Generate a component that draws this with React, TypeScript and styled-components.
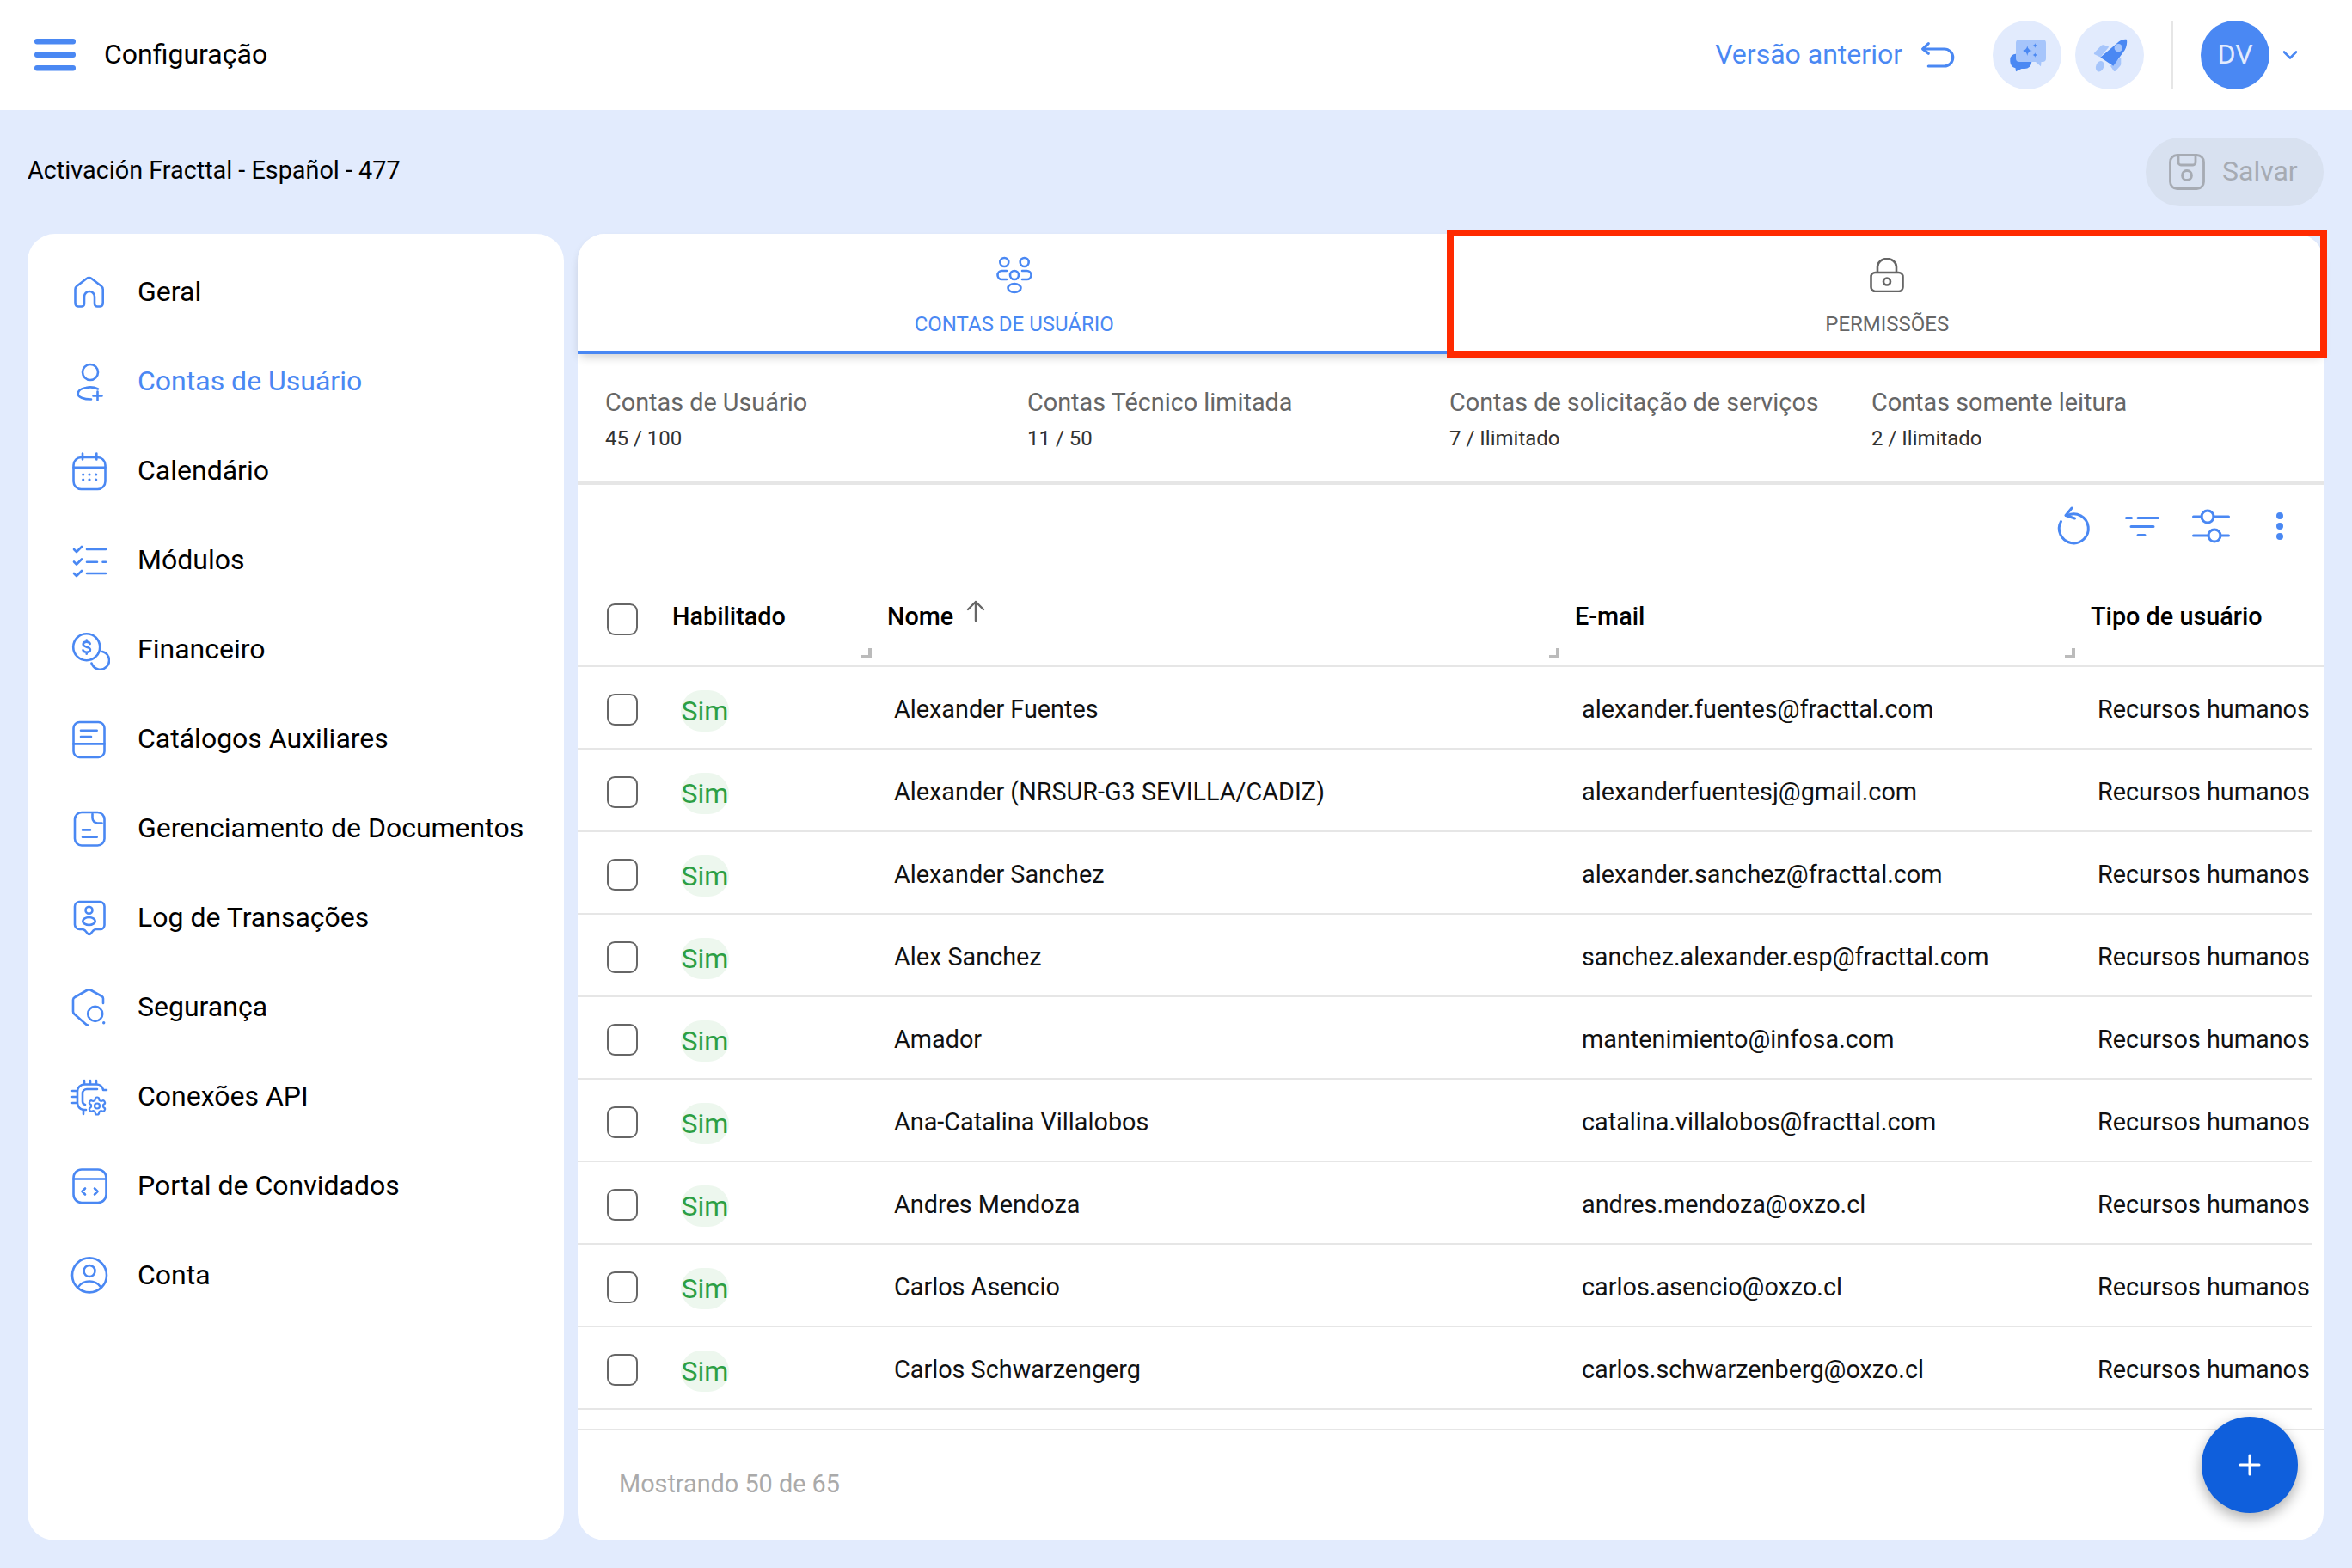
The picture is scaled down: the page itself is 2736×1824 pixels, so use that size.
import React from 'react'
import styled, { createGlobalStyle } from 'styled-components'

const BLUE = '#4a88f3'

const GlobalStyle = createGlobalStyle`
  html, body { margin: 0; padding: 0; background: #e2ebfd; }
  * { box-sizing: border-box; }
  body { font-family: Roboto, "Liberation Sans", sans-serif; color: #000; }
`

const Page = styled.div`
  width: 2736px;
  height: 1824px;
  display: flex;
  flex-direction: column;
  overflow: hidden;
  background: #e2ebfd;
`

const Header = styled.header`
  height: 128px;
  flex: none;
  background: #fff;
  display: flex;
  align-items: center;
  justify-content: space-between;
  padding: 0 60px 0 40px;
`

const HeaderLeft = styled.div`
  display: flex;
  align-items: center;
  gap: 33px;
  font-size: 32px;
`

const PageTitle = styled.span`
  padding-bottom: 2px;
`

const HeaderRight = styled.div`
  display: flex;
  align-items: center;
`

const PrevVersion = styled.span`
  font-size: 32px;
  color: ${BLUE};
  margin-right: 21px;
  padding-bottom: 2px;
`

const RoundButton = styled.div`
  width: 80px;
  height: 80px;
  border-radius: 50%;
  background: #e2ebfd;
  margin-left: ${p => p.$gap}px;
`

const VDivider = styled.div`
  width: 2px;
  height: 80px;
  background: #e6e6e6;
  margin: 0 32px;
`

const Avatar = styled.div`
  width: 80px;
  height: 80px;
  border-radius: 50%;
  background: #4a88f3;
  color: #e2ebfd;
  font-size: 32px;
  display: flex;
  align-items: center;
  justify-content: center;
  margin-right: 12px;
  padding-bottom: 2px;
`

const SubHeader = styled.div`
  height: 144px;
  flex: none;
  display: flex;
  justify-content: space-between;
  align-items: flex-start;
  padding: 32px 33px 0 32px;
`

const ProjectName = styled.div`
  font-size: 28.8px;
  line-height: 76px;
`

const SaveButton = styled.div`
  width: 207px;
  height: 80px;
  border-radius: 40px;
  background: #d8e1f0;
  color: #a6abb3;
  font-size: 32px;
  display: flex;
  align-items: center;
  gap: 20px;
  padding-left: 27px;
`

const SaveLabel = styled.span`
  padding-bottom: 2px;
`

const Body = styled.div`
  flex: 1;
  min-height: 0;
  display: flex;
  gap: 16px;
  padding: 0 33px 32px 32px;
`

const Sidebar = styled.nav`
  width: 624px;
  flex: none;
  background: #fff;
  border-radius: 32px;
  padding-top: 15px;
`

const NavItem = styled.div`
  height: 104px;
  display: flex;
  align-items: center;
  gap: 32px;
  padding-left: 48px;
  font-size: 32px;
  color: ${p => (p.$active ? BLUE : '#000')};
`

const LineIcon = styled.svg`
  flex: none;
  fill: none;
  stroke: ${BLUE};
  stroke-width: 2.6;
  stroke-linecap: round;
  stroke-linejoin: round;
`

const Card = styled.main`
  flex: 1;
  min-width: 0;
  position: relative;
  background: #fff;
  border-radius: 32px;
  display: flex;
  flex-direction: column;
`

const Tabs = styled.div`
  height: 140px;
  flex: none;
  display: grid;
  grid-template-columns: 1fr 1fr;
  border-radius: 32px 32px 0 0;
  background: #fff;
  box-shadow: 0 6px 12px -3px rgba(0, 0, 0, 0.2);
  position: relative;
`

const Tab = styled.div`
  position: relative;
  display: flex;
  flex-direction: column;
  align-items: center;
  font-size: 24px;
  color: ${p => (p.$active ? BLUE : '#666')};
  border-bottom: ${p => (p.$active ? `4px solid ${BLUE}` : 'none')};
  padding-top: ${p => (p.$active ? 24 : 28)}px;
`

const TabLabel = styled.span`
  position: absolute;
  top: 90px;
  line-height: 30px;
`

const RedFrame = styled.div`
  position: absolute;
  top: -5px;
  left: -5px;
  right: -4px;
  bottom: -4px;
  border: 8px solid #ff2a00;
  pointer-events: none;
`

const Stats = styled.div`
  height: 152px;
  flex: none;
  display: grid;
  grid-template-columns: repeat(4, 491px);
  padding: 38px 0 0 32px;
  border-bottom: 4px solid #e6e6e6;
`

const StatLabel = styled.div`
  font-size: 28.8px;
  line-height: 36px;
  color: #666;
`

const StatValue = styled.div`
  font-size: 24px;
  line-height: 30px;
  margin-top: 9px;
  color: #333;
`

const Toolbar = styled.div`
  height: 96px;
  flex: none;
  display: flex;
  align-items: center;
  justify-content: flex-end;
  padding-right: 11px;
`

const ToolButton = styled.div`
  width: 80px;
  height: 64px;
  display: flex;
  align-items: center;
  justify-content: center;
`

const HeadRow = styled.div`
  height: 116px;
  flex: none;
  display: grid;
  grid-template-columns: 110px 250px 800px 600px 1fr;
  align-items: center;
  border-bottom: 2px solid #e6e6e6;
`

const HeadCell = styled.div`
  position: relative;
  height: 100%;
  display: flex;
  align-items: center;
  font-size: 28.8px;
  font-weight: 500;
  gap: 14px;
`

const Resizer = styled.span`
  position: absolute;
  right: 18px;
  bottom: 8px;
  width: 12px;
  height: 12px;
  border-right: 4px solid #bbb;
  border-bottom: 4px solid #bbb;
`

const SortIcon = styled.svg`
  margin-top: -12px;
  fill: none;
  stroke: #666;
  stroke-width: 2.4;
  stroke-linecap: round;
  stroke-linejoin: round;
`

const CheckBox = styled.span`
  display: block;
  width: 36px;
  height: 37px;
  border: 2px solid #666;
  border-radius: 9px;
  margin-left: 34px;
  margin-top: ${p => p.$nudge || 0}px;
`

const Rows = styled.div`
  flex: none;
  width: 2018px;
`

const Row = styled.div`
  height: 96px;
  display: grid;
  grid-template-columns: 120px 248px 800px 600px 1fr;
  align-items: center;
  border-bottom: 2px solid #e6e6e6;
  font-size: 28.8px;
  color: #111;
  padding-top: 4px;
`

const SimChip = styled.span`
  width: 56px;
  height: 48px;
  border-radius: 24px;
  background: #edf7ee;
  color: #2c9f45;
  font-size: 32px;
  display: flex;
  align-items: center;
  justify-content: center;
  margin-top: 3px;
`

const Footer = styled.div`
  margin-top: 22px;
  flex: 1;
  border-top: 2px solid #e6e6e6;
  display: flex;
  align-items: center;
  padding: 0 0 4px 48px;
  font-size: 28.8px;
  color: #aaa;
`

const Fab = styled.div`
  position: absolute;
  right: 30px;
  bottom: 32px;
  width: 112px;
  height: 112px;
  border-radius: 50%;
  background: #0f5fdc;
  box-shadow: 0 6px 16px rgba(0, 0, 0, 0.32);
  display: flex;
  align-items: center;
  justify-content: center;
`

const Icon = ({ children }: { children: React.ReactNode }) => (
  <LineIcon width={48} height={48} viewBox="0 0 48 48">{children}</LineIcon>
)

const gearPath =
  'M12.22 2h-.44a2 2 0 0 0-2 2v.18a2 2 0 0 1-1 1.73l-.43.25a2 2 0 0 1-2 0l-.15-.08a2 2 0 0 0-2.73.73l-.22.38a2 2 0 0 0 .73 2.73l.15.1a2 2 0 0 1 1 1.72v.51a2 2 0 0 1-1 1.74l-.15.09a2 2 0 0 0-.73 2.73l.22.38a2 2 0 0 0 2.73.73l.15-.08a2 2 0 0 1 2 0l.43.25a2 2 0 0 1 1 1.73V20a2 2 0 0 0 2 2h.44a2 2 0 0 0 2-2v-.18a2 2 0 0 1 1-1.73l.43-.25a2 2 0 0 1 2 0l.15.08a2 2 0 0 0 2.73-.73l.22-.39a2 2 0 0 0-.73-2.73l-.15-.08a2 2 0 0 1-1-1.74v-.5a2 2 0 0 1 1-1.74l.15-.09a2 2 0 0 0 .73-2.73l-.22-.38a2 2 0 0 0-2.73-.73l-.15.08a2 2 0 0 1-2 0l-.43-.25a2 2 0 0 1-1-1.73V4a2 2 0 0 0-2-2z'

const navItems: { label: string; active?: boolean; icon: React.ReactNode }[] = [
  {
    label: 'Geral',
    icon: (
      <path d="M7.5 38V21.5c0-1.5.7-2.8 1.9-3.7l11-8.6a5.5 5.5 0 0 1 6.4 0l11 8.6c1.200.9 1.900 2.200 1.900 3.700V38a3.500 3.500 0 0 1-3.500 3.500H33a3 3 0 0 1-3-3V30a6 6 0 0 0-12 0v8.500a3 3 0 0 1-3 3h-4a3.500 3.500 0 0 1-3.500-3.500Z" />
    ),
  },
  {
    label: 'Contas de Usuário',
    active: true,
    icon: (
      <>
        <circle cx="25" cy="14" r="9" />
        <path d="M34 33.500C30 31.500 24 31 20 32c-6 1-9.300 4-9.300 7 0 4 6.300 6.500 15.300 6.500" />
        <path d="M33.500 36.500v10M28.500 41.500h10" />
      </>
    ),
  },
  {
    label: 'Calendário',
    icon: (
      <>
        <rect x="5.500" y="9" width="37" height="37" rx="9" />
        <path d="M5.500 20.700h37M16 4.500v7M32.300 4.500v7" />
        <path d="M16.700 29h.01M24 29h.01M31.700 29h.01M16.700 35h.01M24 35h.01M31.700 35h.01" strokeWidth="3.200" />
      </>
    ),
  },
  {
    label: 'Módulos',
    icon: (
      <>
        <path d="M21 12h22M21 26.700h12M39.500 26.700h3.500M21 40h22" />
        <path d="M6 12l3 3 6-6M6 26.500l3 3 6-6M6 40l3 3 6-6" />
      </>
    ),
  },
  {
    label: 'Financeiro',
    icon: (
      <>
        <circle cx="20.700" cy="21.700" r="15.500" />
        <path d="M24.700 18c-.5-1.500-2-2.400-4-2.400-2.300 0-4 1.200-4 3 0 3.900 8.200 2.200 8.200 6.100 0 1.800-1.800 3-4.200 3-2.100 0-3.600-.9-4.200-2.400M20.700 13.500v2.100M20.700 27.700v2.100" />
        <path d="M39 27a10.500 10.500 0 1 1-12.500 13.500" />
      </>
    ),
  },
  {
    label: 'Catálogos Auxiliares',
    icon: (
      <>
        <rect x="5.500" y="5" width="36" height="41" rx="7" />
        <path d="M5.500 30.400h36M14 14.700h18.700M14 22h12" />
      </>
    ),
  },
  {
    label: 'Gerenciamento de Documentos',
    icon: (
      <>
        <rect x="7" y="6" width="34.500" height="38.500" rx="8" />
        <path d="M27.500 8v4.500a6 6 0 0 0 6 6h5M16 26.400h9M16 34.700h16.700" />
      </>
    ),
  },
  {
    label: 'Log de Transações',
    icon: (
      <>
        <path d="M12 6h24a5.500 5.500 0 0 1 5.500 5.500V33a5 5 0 0 1-5 5h-4.500c-1.500 0-2.500.5-3.500 1.500l-3 3.500a2.500 2.500 0 0 1-3.500 0l-3-3.500c-1-1-2-1.500-3.500-1.500h-3A5.500 5.500 0 0 1 7 32.500v-21A5.500 5.500 0 0 1 12 6Z" />
        <circle cx="23.500" cy="15.700" r="4" />
        <ellipse cx="23.500" cy="28.500" rx="7.200" ry="4.500" />
      </>
    ),
  },
  {
    label: 'Segurança',
    icon: (
      <>
        <path d="M40 20v-5.500a3 3 0 0 0-1.500-2.500L26 5a5 5 0 0 0-5 0L7 13a3.500 3.500 0 0 0-2 3v13.500a4 4 0 0 0 1.300 3L20 44.500a3.500 3.500 0 0 0 2.500 1" />
        <circle cx="30.700" cy="32.400" r="8.500" />
        <path d="M40.700 42.700h.01" strokeWidth="3.400" />
      </>
    ),
  },
  {
    label: 'Conexões API',
    icon: (
      <>
        <path d="M40 16.500a8 8 0 0 0-8-6H18a8 8 0 0 0-8 8V32a8 8 0 0 0 7 8h3" />
        <path d="M33 16H21a5 5 0 0 0-5 5v9a4 4 0 0 0 3 4" />
        <path d="M18 6v4M25 6v4M32 6v4M4 18h5M4 25h5M4 32h5M40 17h4M17 40v5" />
        <g transform="translate(21 23.500)">
          <path d={gearPath} strokeWidth="2.200" />
          <circle cx="12" cy="12" r="3" strokeWidth="2.200" />
        </g>
      </>
    ),
  },
  {
    label: 'Portal de Convidados',
    icon: (
      <>
        <rect x="5.500" y="5.500" width="38" height="38.500" rx="9.500" />
        <path d="M5.500 16.500h38M19 27.500l-3.500 3.500 3.500 3.500M30 27.500l3.500 3.500-3.500 3.500" />
      </>
    ),
  },
  {
    label: 'Conta',
    icon: (
      <>
        <circle cx="24" cy="24.400" r="20" />
        <circle cx="24" cy="19.500" r="6.500" />
        <path d="M11 38c3-4 7.500-6.500 13-6.500S34 34 37 38" />
      </>
    ),
  },
]

const stats = [
  ['Contas de Usuário', '45 / 100'],
  ['Contas Técnico limitada', '11 / 50'],
  ['Contas de solicitação de serviços', '7 / Ilimitado'],
  ['Contas somente leitura', '2 / Ilimitado'],
]

const users = [
  ['Alexander Fuentes', 'alexander.fuentes@fracttal.com'],
  ['Alexander (NRSUR-G3 SEVILLA/CADIZ)', 'alexanderfuentesj@gmail.com'],
  ['Alexander Sanchez', 'alexander.sanchez@fracttal.com'],
  ['Alex Sanchez', 'sanchez.alexander.esp@fracttal.com'],
  ['Amador', 'mantenimiento@infosa.com'],
  ['Ana-Catalina Villalobos', 'catalina.villalobos@fracttal.com'],
  ['Andres Mendoza', 'andres.mendoza@oxzo.cl'],
  ['Carlos Asencio', 'carlos.asencio@oxzo.cl'],
  ['Carlos Schwarzengerg', 'carlos.schwarzenberg@oxzo.cl'],
]

export default function App() {
  return (
    <Page>
      <GlobalStyle />
      <Header>
        <HeaderLeft>
          <svg width="48" height="40" viewBox="0 0 48 40">
            <g fill={BLUE}>
              <rect y="1" width="48" height="6.500" rx="3" />
              <rect y="16.500" width="48" height="6.500" rx="3" />
              <rect y="32" width="48" height="6.500" rx="3" />
            </g>
          </svg>
          <PageTitle>Configuração</PageTitle>
        </HeaderLeft>
        <HeaderRight>
          <PrevVersion>Versão anterior</PrevVersion>
          <svg width="40" height="36" viewBox="0 0 40 36" fill="none" stroke={BLUE} strokeWidth="3.200" strokeLinecap="round" strokeLinejoin="round">
            <path d="M9.300 4.700 2.700 11l6.600 5.300" />
            <path d="M3 11h24.700a10 10 0 0 1 0 20H9.300" />
          </svg>
          <RoundButton $gap={44}>
            <svg width="80" height="80" viewBox="0 0 80 80">
              <path d="M27 38.700h10a8.300 8.300 0 0 1 8.300 8.300v1a8 8 0 0 1-8 8h-3.800L27 59.300l-.5-4a8.500 8.500 0 0 1-6.200-7.800V45a6.500 6.500 0 0 1 6.700-6.300Z" fill="#4a88f3" />
              <path d="M31 22h27a4 4 0 0 1 4 4v18a4 4 0 0 1-4 4h-1.500l-.5 5.300-6-5.300H31a4 4 0 0 1-4-4V26a4 4 0 0 1 4-4Z" fill="#a6c5fb" />
              <path d="M40.300 29c.7 3.800 2 5.200 5.700 6-3.700.8-5 2.200-5.700 6-.7-3.800-2-5.200-5.700-6 3.700-.8 5-2.200 5.700-6ZM49.300 26c.3 1.800.9 2.500 2.700 3-1.800.5-2.400 1.200-2.700 3-.3-1.800-.9-2.500-2.700-3 1.800-.5 2.400-1.200 2.700-3ZM49.300 37c.3 1.800.9 2.500 2.700 3-1.800.5-2.400 1.200-2.700 3-.3-1.800-.9-2.500-2.700-3 1.800-.5 2.400-1.200 2.700-3Z" fill="#4a88f3" />
            </svg>
          </RoundButton>
          <RoundButton $gap={16}>
            <svg width="80" height="80" viewBox="0 0 80 80">
              <path d="M22 37.700l8-8.400c1-1 2-1.300 3.200-1l6.100 2.200-10 12L23 39.500c-1-.5-1.400-1.200-1-1.800ZM53.300 42.700v7.500c0 1-.3 1.800-1 2.500l-5.500 6c-.8.700-1.800.5-2.200-.5L41 52.700Z" fill="#a6c5fb" />
              <ellipse cx="28.700" cy="53.300" rx="4.500" ry="6.500" transform="rotate(22 28.700 53.300)" fill="#a6c5fb" />
              <path d="M60 22c-3-.5-6.500.3-9 2.300L29.300 42.700l15 10 13.400-18.400c2-3.500 3-8.300 2.300-12.300Z" fill="#4a88f3" />
              <circle cx="50.300" cy="31.700" r="4.700" fill="#a6c5fb" />
            </svg>
          </RoundButton>
          <VDivider />
          <Avatar>DV</Avatar>
          <svg width="24" height="24" viewBox="0 0 24 24" fill="none" stroke={BLUE} strokeWidth="2.600" strokeLinecap="round" strokeLinejoin="round">
            <path d="M5 8.500l7 7 7-7" />
          </svg>
        </HeaderRight>
      </Header>

      <SubHeader>
        <ProjectName>Activación Fracttal - Español - 477</ProjectName>
        <SaveButton>
          <svg width="42" height="42" viewBox="0 0 42 42" fill="none" stroke="#a6abb3" strokeWidth="2.800" strokeLinejoin="round">
            <rect x="1.500" y="1.500" width="39" height="39" rx="8" />
            <path d="M11 2v8a3 3 0 0 0 3 3h14a3 3 0 0 0 3-3V2" />
            <circle cx="21" cy="25" r="5.500" />
          </svg>
          <SaveLabel>Salvar</SaveLabel>
        </SaveButton>
      </SubHeader>

      <Body>
        <Sidebar>
          {navItems.map(item => (
            <NavItem key={item.label} $active={item.active}>
              <Icon>{item.icon}</Icon>
              {item.label}
            </NavItem>
          ))}
        </Sidebar>

        <Card>
          <Tabs>
            <Tab $active>
              <LineIcon width={48} height={48} viewBox="0 0 48 48">
                <circle cx="12.300" cy="9" r="5" />
                <circle cx="35.700" cy="9" r="5" />
                <circle cx="24" cy="24" r="5" />
                <ellipse cx="24" cy="39" rx="7.500" ry="5" />
                <path d="M15 19H9.500a5 5 0 0 0 0 10H15M33 19h5.500a5 5 0 0 1 0 10H33" />
              </LineIcon>
              <TabLabel>CONTAS DE USUÁRIO</TabLabel>
            </Tab>
            <Tab>
              <svg width="40" height="40" viewBox="0 0 40 40" fill="none" stroke="#666" strokeWidth="2.600" strokeLinejoin="round">
                <rect x="1.500" y="17" width="37" height="22" rx="5" />
                <path d="M9 17V10.500a11 9.500 0 0 1 22 0V17" />
                <circle cx="20" cy="27.500" r="4" />
              </svg>
              <TabLabel>PERMISSÕES</TabLabel>
              <RedFrame />
            </Tab>
          </Tabs>

          <Stats>
            {stats.map(([label, value]) => (
              <div key={label}>
                <StatLabel>{label}</StatLabel>
                <StatValue>{value}</StatValue>
              </div>
            ))}
          </Stats>

          <Toolbar>
            <ToolButton>
              <svg width="44" height="46" viewBox="0 0 44 46" fill="none" stroke={BLUE} strokeWidth="3" strokeLinecap="round" strokeLinejoin="round">
                <path d="M15 10.500A17 17 0 1 1 7.500 17.500" />
                <path d="M20 2l-7 8.500L23.500 14" />
              </svg>
            </ToolButton>
            <ToolButton>
              <svg width="40" height="24" viewBox="0 0 40 24" fill="none" stroke={BLUE} strokeWidth="3" strokeLinecap="round">
                <path d="M1.500 2.500h6M15 2.500h23.500M7 12.500h26M15 22.500h8" />
              </svg>
            </ToolButton>
            <ToolButton>
              <svg width="44" height="40" viewBox="0 0 44 40" fill="none" stroke={BLUE} strokeWidth="3" strokeLinecap="round">
                <circle cx="18" cy="9" r="7" />
                <circle cx="26" cy="31" r="7" />
                <path d="M1.500 9H11M25 9h17.500M1.500 31H19M33 31h9.500" />
              </svg>
            </ToolButton>
            <ToolButton>
              <svg width="10" height="36" viewBox="0 0 10 36" fill={BLUE}>
                <circle cx="5" cy="6" r="4" />
                <circle cx="5" cy="18" r="4" />
                <circle cx="5" cy="30" r="4" />
              </svg>
            </ToolButton>
          </Toolbar>

          <HeadRow>
            <CheckBox $nudge={6} />
            <HeadCell>
              Habilitado
              <Resizer />
            </HeadCell>
            <HeadCell>
              Nome
              <SortIcon width="24" height="26" viewBox="0 0 24 26">
                <path d="M12 24V2M3 11l9-9 9 9" />
              </SortIcon>
              <Resizer />
            </HeadCell>
            <HeadCell>
              E-mail
              <Resizer />
            </HeadCell>
            <HeadCell>Tipo de usuário</HeadCell>
          </HeadRow>

          <Rows>
            {users.map(([name, email]) => (
              <Row key={email}>
                <CheckBox />
                <SimChip>Sim</SimChip>
                <span>{name}</span>
                <span>{email}</span>
                <span>Recursos humanos</span>
              </Row>
            ))}
          </Rows>

          <Footer>Mostrando 50 de 65</Footer>

          <Fab>
            <svg width="26" height="26" viewBox="0 0 26 26" stroke="#fff" strokeWidth="3" strokeLinecap="round">
              <path d="M13 2v22M2 13h22" />
            </svg>
          </Fab>
        </Card>
      </Body>
    </Page>
  )
}
